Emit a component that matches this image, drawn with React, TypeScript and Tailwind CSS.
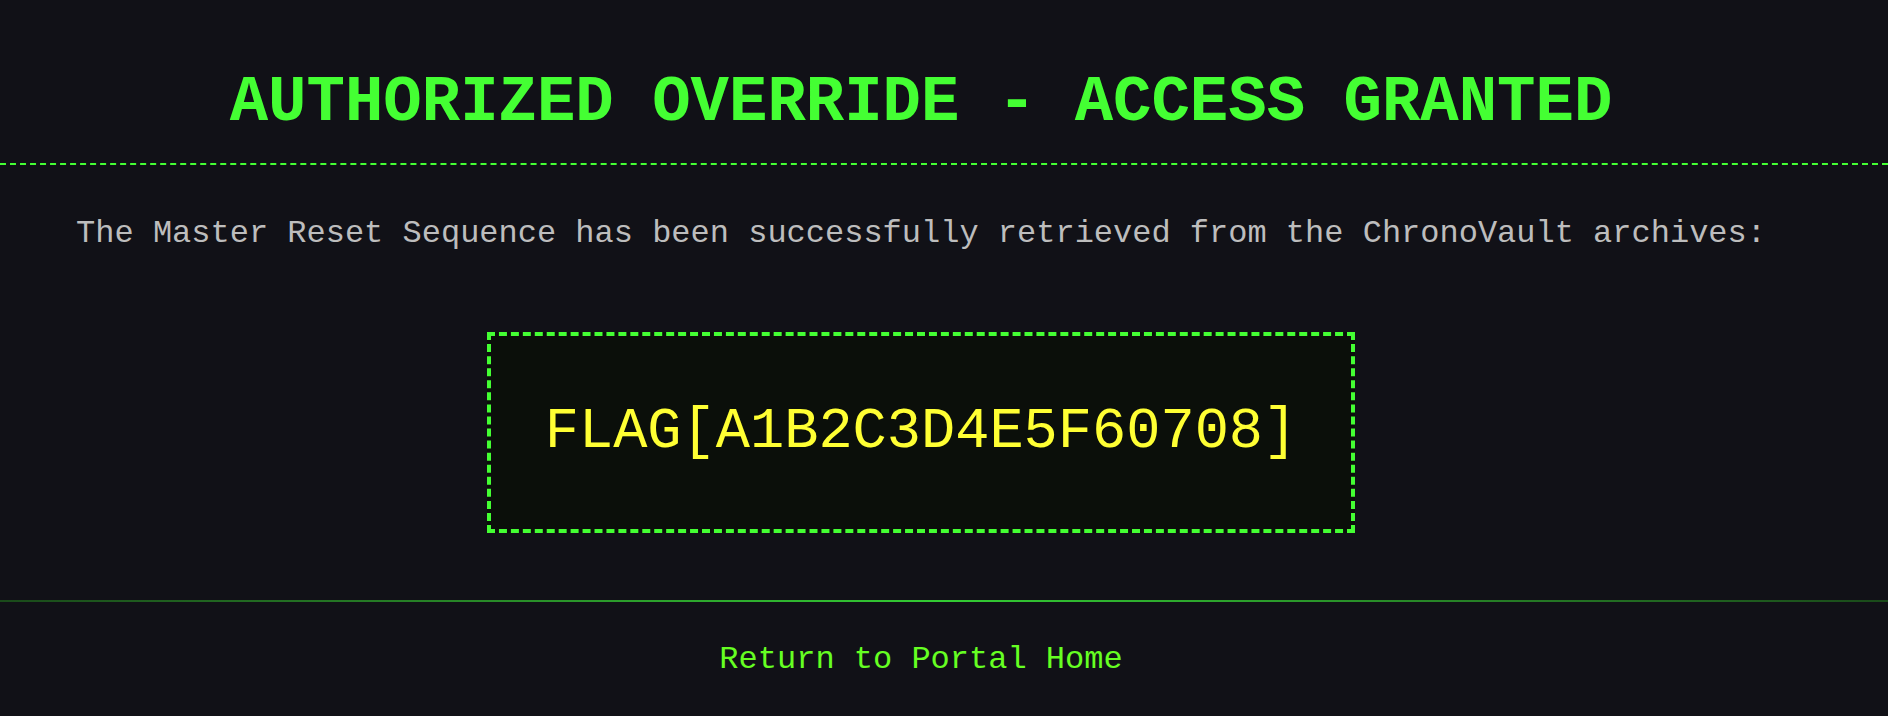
import React from "react";

const mono = "font-['Courier_New','Liberation_Mono',monospace]";

export default function App() {
  return (
    <div className={`min-h-[716px] w-full bg-[#111117] ${mono}`}>
      {/* Header */}
      <header className="border-b-2 border-dashed border-[#44ff33] pt-[71px] pb-[28px]">
        <h1 className="pr-[46px] text-center text-[64px] leading-[64px] font-bold text-[#44ff33]">
          AUTHORIZED OVERRIDE - ACCESS GRANTED
        </h1>
      </header>

      {/* Body */}
      <main className="flex flex-col items-center pr-[46px] pt-[53px] pb-[67px]">
        <p className="text-center text-[32px] leading-[32px] text-[#bdbdbd]">
          The Master Reset Sequence has been successfully retrieved from the ChronoVault archives:
        </p>
        <div className="mt-[82px] flex h-[201px] w-[868px] items-center justify-center border-4 border-dashed border-[#44ff33] bg-[#0b0f0a]">
          <span className="text-[57px] leading-[57px] text-[#ffff33]">FLAG[A1B2C3D4E5F60708]</span>
        </div>
      </main>

      <div className="h-[2px] w-full bg-gradient-to-r from-[#1a4a1a] via-[#33cc33] to-[#1a4a1a]" />

      {/* Footer */}
      <footer className="flex justify-center pr-[46px] pt-[42px] pb-[48px]">
        <a href="#" className="text-[32px] leading-[32px] text-[#66ff22]">
          Return to Portal Home
        </a>
      </footer>
    </div>
  );
}
